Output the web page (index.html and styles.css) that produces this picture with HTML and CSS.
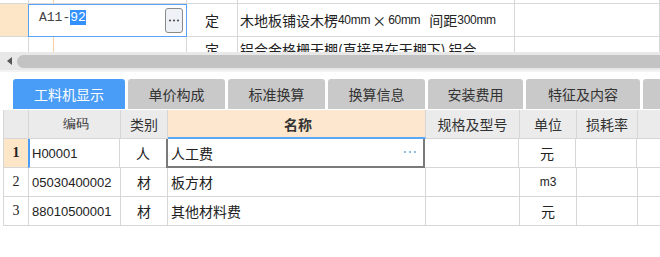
FILE: index.html
```html
<!DOCTYPE html>
<html lang="zh">
<head>
  <meta charset="UTF-8" />
  <title>工料机显示</title>
  <link rel="stylesheet" href="styles.css">
</head>
<body>
  <div class="top-grid">
    <div class="row row-cut">
      <div class="c c-ind"></div>
      <div class="c c-a"></div>
      <div class="c c-b"></div>
      <div class="c c-type"></div>
      <div class="c c-desc"></div>
      <div class="c c-rest"></div>
    </div>
    <div class="row">
      <div class="c c-ind on"></div>
      <div class="c editor">
        <span class="code-text">A11-<span class="sel">92</span></span>
        <span class="more-btn">
          <svg viewBox="0 0 16 23" width="16" height="23">
            <circle cx="4" cy="11.5" r="1.1" fill="#555"/>
            <circle cx="8" cy="11.5" r="1.1" fill="#555"/>
            <circle cx="12" cy="11.5" r="1.1" fill="#555"/>
          </svg>
        </span>
      </div>
      <div class="c c-type">定</div>
      <div class="c c-desc">木地板铺设木楞<span class="lat">40mm</span><span class="x">×</span><span class="lat">60mm</span><span class="gap"></span>间距<span class="lat">300mm</span></div>
      <div class="c c-rest"></div>
    </div>
    <div class="row row-low">
      <div class="c c-ind"></div>
      <div class="c c-a"></div>
      <div class="c c-b"></div>
      <div class="c c-type">定</div>
      <div class="c c-desc">铝合金格栅天棚(直接吊在天棚下) 铝合</div>
      <div class="c c-rest"></div>
    </div>
  </div>

  <div class="hscroll">
    <span class="arrow"></span>
    <span class="thumb"></span>
  </div>
  <div class="split"></div>

  <div class="tabs">
    <div class="tab active" style="width:112px">工料机显示</div>
    <div class="tab" style="width:97px">单价构成</div>
    <div class="tab" style="width:97px">标准换算</div>
    <div class="tab" style="width:97px">换算信息</div>
    <div class="tab" style="width:95px">安装费用</div>
    <div class="tab" style="width:114px">特征及内容</div>
    <div class="tab tab-more"></div>
  </div>

  <div class="grid">
    <div class="g-row head">
      <div class="g num"></div>
      <div class="g code">编码</div>
      <div class="g kind">类别</div>
      <div class="g name cur">名称</div>
      <div class="g spec">规格及型号</div>
      <div class="g unit">单位</div>
      <div class="g loss">损耗率</div>
      <div class="g last"></div>
    </div>
    <div class="g-row">
      <div class="g num on">1</div>
      <div class="g code first">H00001</div>
      <div class="g kind">人</div>
      <div class="g name active">人工费
        <svg class="dots" viewBox="0 0 14 4" width="14" height="4">
          <circle cx="2" cy="2" r="1.1" fill="#78aee0"/>
          <circle cx="7" cy="2" r="1.1" fill="#78aee0"/>
          <circle cx="12" cy="2" r="1.1" fill="#78aee0"/>
        </svg>
      </div>
      <div class="g spec"></div>
      <div class="g unit">元</div>
      <div class="g loss"></div>
      <div class="g last"></div>
    </div>
    <div class="g-row">
      <div class="g num">2</div>
      <div class="g code">05030400002</div>
      <div class="g kind">材</div>
      <div class="g name">板方材</div>
      <div class="g spec"></div>
      <div class="g unit small">m3</div>
      <div class="g loss"></div>
      <div class="g last"></div>
    </div>
    <div class="g-row">
      <div class="g num">3</div>
      <div class="g code">88010500001</div>
      <div class="g kind">材</div>
      <div class="g name">其他材料费</div>
      <div class="g spec"></div>
      <div class="g unit">元</div>
      <div class="g loss"></div>
      <div class="g last"></div>
    </div>
  </div>
</body>
</html>
```

FILE: styles.css
```css
body {
  margin: 0;
  width: 660px;
  height: 257px;
  overflow: hidden;
  background: #fff;
  font-family: "Noto Sans CJK SC", "Liberation Sans", sans-serif;
  font-size: 14px;
  color: #222;
}

/* upper list */
.top-grid {
  height: 52px;
  overflow: hidden;
}

.row {
  display: grid;
  grid-template-columns: 29px 25px 133px 51px 277px 1fr;
  height: 33px;
}

.row-cut {
  height: 4px;
}

.c {
  border-right: 1px solid #d8d8d8;
  border-bottom: 1px solid #d8d8d8;
  display: flex;
  align-items: center;
  white-space: nowrap;
  overflow: hidden;
}

.row-low .c {
  align-items: flex-start;
  line-height: 16px;
  padding-top: 4px;
}

.c-ind.on {
  background: #fde5c8;
}

.c-a {
  border-right: 1px solid #f9d2a4;
}

.c-type {
  justify-content: center;
}

.c-desc {
  padding-left: 2px;
}

.lat {
  font-family: "Liberation Sans", sans-serif;
  font-size: 12px;
  letter-spacing: -0.3px;
}

.x {
  margin: 0 2px;
}

.gap {
  width: 9px;
}

.editor {
  grid-column: span 2;
  border: 1px solid #5aa2f2;
  justify-content: space-between;
  padding: 0 3px 0 10px;
  margin-left: -1px;
}

.code-text {
  font-family: "Liberation Mono", monospace;
  font-size: 13px;
  color: #444;
  margin-bottom: 6px;
}

.sel {
  background: #3390ff;
  color: #fff;
}

.more-btn {
  flex: none;
  display: block;
  width: 16px;
  height: 23px;
  border: 1px solid #8a8a8a;
  border-radius: 3px;
  background: #eef1f5;
}

.more-btn svg {
  display: block;
}

/* scrollbar */
.hscroll {
  height: 18px;
  background: #e8e8e8;
  display: flex;
  align-items: center;
  gap: 5px;
  padding-left: 7px;
}

.arrow {
  width: 0;
  height: 0;
  border-top: 4px solid transparent;
  border-bottom: 4px solid transparent;
  border-right: 5px solid #555;
}

.thumb {
  flex: 1;
  height: 13px;
  background: #c3c3c3;
  border-radius: 7px 0 0 7px;
}

.split {
  height: 9px;
  border-top: 2px solid #f3f3f3;
  background: #fff;
  box-sizing: border-box;
}

/* tabs */
.tabs {
  display: flex;
  gap: 3px;
  padding-left: 13px;
  height: 31px;
}

.tab {
  flex: none;
  height: 30px;
  background: #c9c9c9;
  border-radius: 3px 3px 0 0;
  display: flex;
  align-items: center;
  justify-content: center;
  color: #333;
  font-size: 14px;
}

.tab.active {
  background: #4a9df7;
  color: #fff;
}

.tab-more {
  flex: 1;
  border-radius: 3px 0 0 0;
}

/* detail grid */
.grid {
  margin-left: 3px;
}

.g-row {
  display: flex;
  height: 29px;
}

.g {
  flex: none;
  box-sizing: border-box;
  border-right: 1px solid #d6d6d6;
  border-bottom: 1px solid #d6d6d6;
  display: flex;
  align-items: center;
  white-space: nowrap;
  position: relative;
}

.head .g {
  background: #ebebeb;
  justify-content: center;
  color: #333;
}

.head .name {
  background: #fde8cf;
  font-weight: bold;
  border-bottom: 2px solid #5aa7f5;
}

.num { width: 26px; justify-content: center; font-family: "Liberation Serif", serif; font-size: 14px; border-left: 1px solid #d6d6d6; }
.code { width: 92px; padding-left: 3px; font-family: "Liberation Sans", sans-serif; font-size: 13px; }
.kind { width: 47px; justify-content: center; }
.name { width: 258px; padding-left: 3px; }
.spec { width: 94px; }
.unit { width: 57px; justify-content: center; }
.loss { width: 61px; }
.last { flex: 1; border-right: none; }

.num.on {
  background: #fde5c8;
  font-weight: bold;
}

.code.first {
  border-left: 2px solid #4a9df7;
  margin-left: -1px;
  padding-left: 2px;
}

.name.active {
  border: 2px solid #7a7a7a;
  border-top: none;
  margin-left: -1px;
  width: 259px;
}

.dots {
  position: absolute;
  right: 6px;
  top: 11px;
}

.unit.small {
  font-family: "Liberation Sans", sans-serif;
  font-size: 12px;
}
```
